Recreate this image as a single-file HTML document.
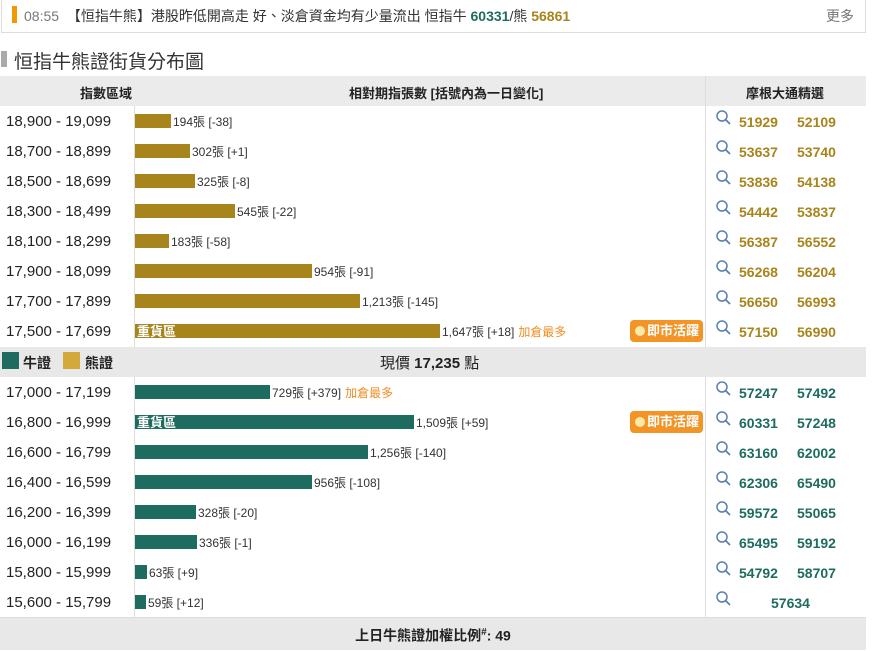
<!DOCTYPE html>
<html><head><meta charset="utf-8"><style>
*{margin:0;padding:0;box-sizing:border-box}
body{width:872px;height:650px;background:#fff;font-family:"Liberation Sans","Noto Sans CJK TC",sans-serif;position:relative;overflow:hidden;color:#222}
.top{position:absolute;left:1px;top:0;width:865px;height:33px;border:1px solid #ddd;border-top:none}
.top .bar{position:absolute;left:10px;top:6px;width:5px;height:17px;background:#f39800}
.top .t{position:absolute;left:22px;top:6px;font-size:14px;color:#333;white-space:nowrap}
.top .more{position:absolute;right:11px;top:6px;font-size:14px;color:#777}
h2{position:absolute;left:14px;top:47px;font-size:19px;font-weight:normal;color:#333}
.hb{position:absolute;left:1px;top:51px;width:6px;height:16px;background:#aaa}
.hdr{position:absolute;left:0;top:76px;width:866px;height:30px;background:#ebebeb;font-size:13px;font-weight:bold}
.hdr span{position:absolute;top:7px}
.vl{position:absolute;width:1px;background:#ddd}
.row{position:absolute;left:0;width:866px;height:30px}
.row .r{position:absolute;left:6px;top:7px;font-size:15px;color:#222}
.row .b{position:absolute;left:135px;top:8px;height:14px;color:#fff;font-size:13px;font-weight:bold;padding-left:2px;line-height:15px}
.row .n{position:absolute;top:7px;font-size:12px;color:#333;white-space:nowrap}
.row .n i{font-style:normal;color:#f08c1e;margin-left:4px}
.g{background:#a8841c}.t2{background:#1e6b5f}
.row .q{position:absolute;left:715px;top:3px}
.row .c{position:absolute;top:8px;font-size:14px;font-weight:bold}
.gc{color:#a8841c}.tc{color:#1e6b5f}
.badge{position:absolute;left:630px;top:4px;width:73px;height:22px;background:#f39427;border-radius:4px;color:#fff;font-size:13px;font-weight:bold;line-height:22px;padding-left:17px}
.badge:before{content:"";position:absolute;left:5px;top:6px;width:10px;height:10px;border-radius:5px;background:#ffe9a8}
.mid{position:absolute;left:0;top:347px;width:866px;height:30px;background:#e8e8e8}
.ft{position:absolute;left:0;top:617px;width:866px;height:33px;background:#e8e8e8;border-top:1px solid #ddd;text-align:center;font-size:14px;font-weight:bold;line-height:30px}
</style></head><body>
<div class="top"><div class="bar"></div><div class="t"><span style="color:#777">08:55</span>&nbsp;&nbsp;【恒指牛熊】港股昨低開高走 好、淡倉資金均有少量流出 恒指牛 <b style="color:#1e6b5f">60331</b>/熊 <b style="color:#a8841c">56861</b></div><div class="more">更多</div></div>
<div class="hb"></div><h2>恒指牛熊證街貨分布圖</h2>
<div class="hdr"><span style="left:80px">指數區域</span><span style="left:349px">相對期指張數 [括號內為一日變化]</span><span style="left:746px">摩根大通精選</span></div>
<div class="vl" style="left:134px;top:106px;height:241px"></div>
<div class="vl" style="left:705px;top:76px;height:271px"></div>
<div class="vl" style="left:134px;top:377px;height:241px"></div>
<div class="vl" style="left:705px;top:377px;height:241px"></div>

<svg width="0" height="0" style="position:absolute"><defs><symbol id="s" viewBox="0 0 18 18"><circle cx="7" cy="7" r="5" fill="none" stroke="#5b7fae" stroke-width="1.5"/><line x1="10.5" y1="10.5" x2="15" y2="15" stroke="#5b7fae" stroke-width="1.8"/></symbol></defs></svg>

<div class="row" style="top:106px"><span class="r">18,900 - 19,099</span><div class="b g" style="width:36px"></div><span class="n" style="left:173px">194張 [-38]</span><svg class="q" width="18" height="18"><use href="#s"/></svg><span class="c gc" style="left:739px">51929</span><span class="c gc" style="left:797px">52109</span></div>
<div class="row" style="top:136px"><span class="r">18,700 - 18,899</span><div class="b g" style="width:55px"></div><span class="n" style="left:192px">302張 [+1]</span><svg class="q" width="18" height="18"><use href="#s"/></svg><span class="c gc" style="left:739px">53637</span><span class="c gc" style="left:797px">53740</span></div>
<div class="row" style="top:166px"><span class="r">18,500 - 18,699</span><div class="b g" style="width:60px"></div><span class="n" style="left:197px">325張 [-8]</span><svg class="q" width="18" height="18"><use href="#s"/></svg><span class="c gc" style="left:739px">53836</span><span class="c gc" style="left:797px">54138</span></div>
<div class="row" style="top:196px"><span class="r">18,300 - 18,499</span><div class="b g" style="width:100px"></div><span class="n" style="left:237px">545張 [-22]</span><svg class="q" width="18" height="18"><use href="#s"/></svg><span class="c gc" style="left:739px">54442</span><span class="c gc" style="left:797px">53837</span></div>
<div class="row" style="top:226px"><span class="r">18,100 - 18,299</span><div class="b g" style="width:34px"></div><span class="n" style="left:171px">183張 [-58]</span><svg class="q" width="18" height="18"><use href="#s"/></svg><span class="c gc" style="left:739px">56387</span><span class="c gc" style="left:797px">56552</span></div>
<div class="row" style="top:256px"><span class="r">17,900 - 18,099</span><div class="b g" style="width:177px"></div><span class="n" style="left:314px">954張 [-91]</span><svg class="q" width="18" height="18"><use href="#s"/></svg><span class="c gc" style="left:739px">56268</span><span class="c gc" style="left:797px">56204</span></div>
<div class="row" style="top:286px"><span class="r">17,700 - 17,899</span><div class="b g" style="width:225px"></div><span class="n" style="left:362px">1,213張 [-145]</span><svg class="q" width="18" height="18"><use href="#s"/></svg><span class="c gc" style="left:739px">56650</span><span class="c gc" style="left:797px">56993</span></div>
<div class="row" style="top:316px"><span class="r">17,500 - 17,699</span><div class="b g" style="width:305px">重貨區</div><span class="n" style="left:442px">1,647張 [+18]<i>加倉最多</i></span><div class="badge">即市活躍</div><svg class="q" width="18" height="18"><use href="#s"/></svg><span class="c gc" style="left:739px">57150</span><span class="c gc" style="left:797px">56990</span></div>

<div class="mid"><div style="position:absolute;left:2px;top:5px;width:17px;height:17px;background:#1e6b5f"></div><span style="position:absolute;left:23px;top:6px;font-size:14px;font-weight:bold">牛證</span><div style="position:absolute;left:63px;top:5px;width:17px;height:17px;background:#d4a93c"></div><span style="position:absolute;left:85px;top:6px;font-size:14px;font-weight:bold">熊證</span><span style="position:absolute;left:380px;top:5px;font-size:15px">現價 <b>17,235</b> 點</span></div>

<div class="row" style="top:377px"><span class="r">17,000 - 17,199</span><div class="b t2" style="width:135px"></div><span class="n" style="left:272px">729張 [+379]<i>加倉最多</i></span><svg class="q" width="18" height="18"><use href="#s"/></svg><span class="c tc" style="left:739px">57247</span><span class="c tc" style="left:797px">57492</span></div>
<div class="row" style="top:407px"><span class="r">16,800 - 16,999</span><div class="b t2" style="width:279px">重貨區</div><span class="n" style="left:416px">1,509張 [+59]</span><div class="badge">即市活躍</div><svg class="q" width="18" height="18"><use href="#s"/></svg><span class="c tc" style="left:739px">60331</span><span class="c tc" style="left:797px">57248</span></div>
<div class="row" style="top:437px"><span class="r">16,600 - 16,799</span><div class="b t2" style="width:233px"></div><span class="n" style="left:370px">1,256張 [-140]</span><svg class="q" width="18" height="18"><use href="#s"/></svg><span class="c tc" style="left:739px">63160</span><span class="c tc" style="left:797px">62002</span></div>
<div class="row" style="top:467px"><span class="r">16,400 - 16,599</span><div class="b t2" style="width:177px"></div><span class="n" style="left:314px">956張 [-108]</span><svg class="q" width="18" height="18"><use href="#s"/></svg><span class="c tc" style="left:739px">62306</span><span class="c tc" style="left:797px">65490</span></div>
<div class="row" style="top:497px"><span class="r">16,200 - 16,399</span><div class="b t2" style="width:61px"></div><span class="n" style="left:198px">328張 [-20]</span><svg class="q" width="18" height="18"><use href="#s"/></svg><span class="c tc" style="left:739px">59572</span><span class="c tc" style="left:797px">55065</span></div>
<div class="row" style="top:527px"><span class="r">16,000 - 16,199</span><div class="b t2" style="width:62px"></div><span class="n" style="left:199px">336張 [-1]</span><svg class="q" width="18" height="18"><use href="#s"/></svg><span class="c tc" style="left:739px">65495</span><span class="c tc" style="left:797px">59192</span></div>
<div class="row" style="top:557px"><span class="r">15,800 - 15,999</span><div class="b t2" style="width:12px"></div><span class="n" style="left:149px">63張 [+9]</span><svg class="q" width="18" height="18"><use href="#s"/></svg><span class="c tc" style="left:739px">54792</span><span class="c tc" style="left:797px">58707</span></div>
<div class="row" style="top:587px"><span class="r">15,600 - 15,799</span><div class="b t2" style="width:11px"></div><span class="n" style="left:148px">59張 [+12]</span><svg class="q" width="18" height="18"><use href="#s"/></svg><span class="c tc" style="left:771px">57634</span></div>

<div class="ft">上日牛熊證加權比例<sup style="font-size:10px">#</sup>: 49</div>
</body></html>
